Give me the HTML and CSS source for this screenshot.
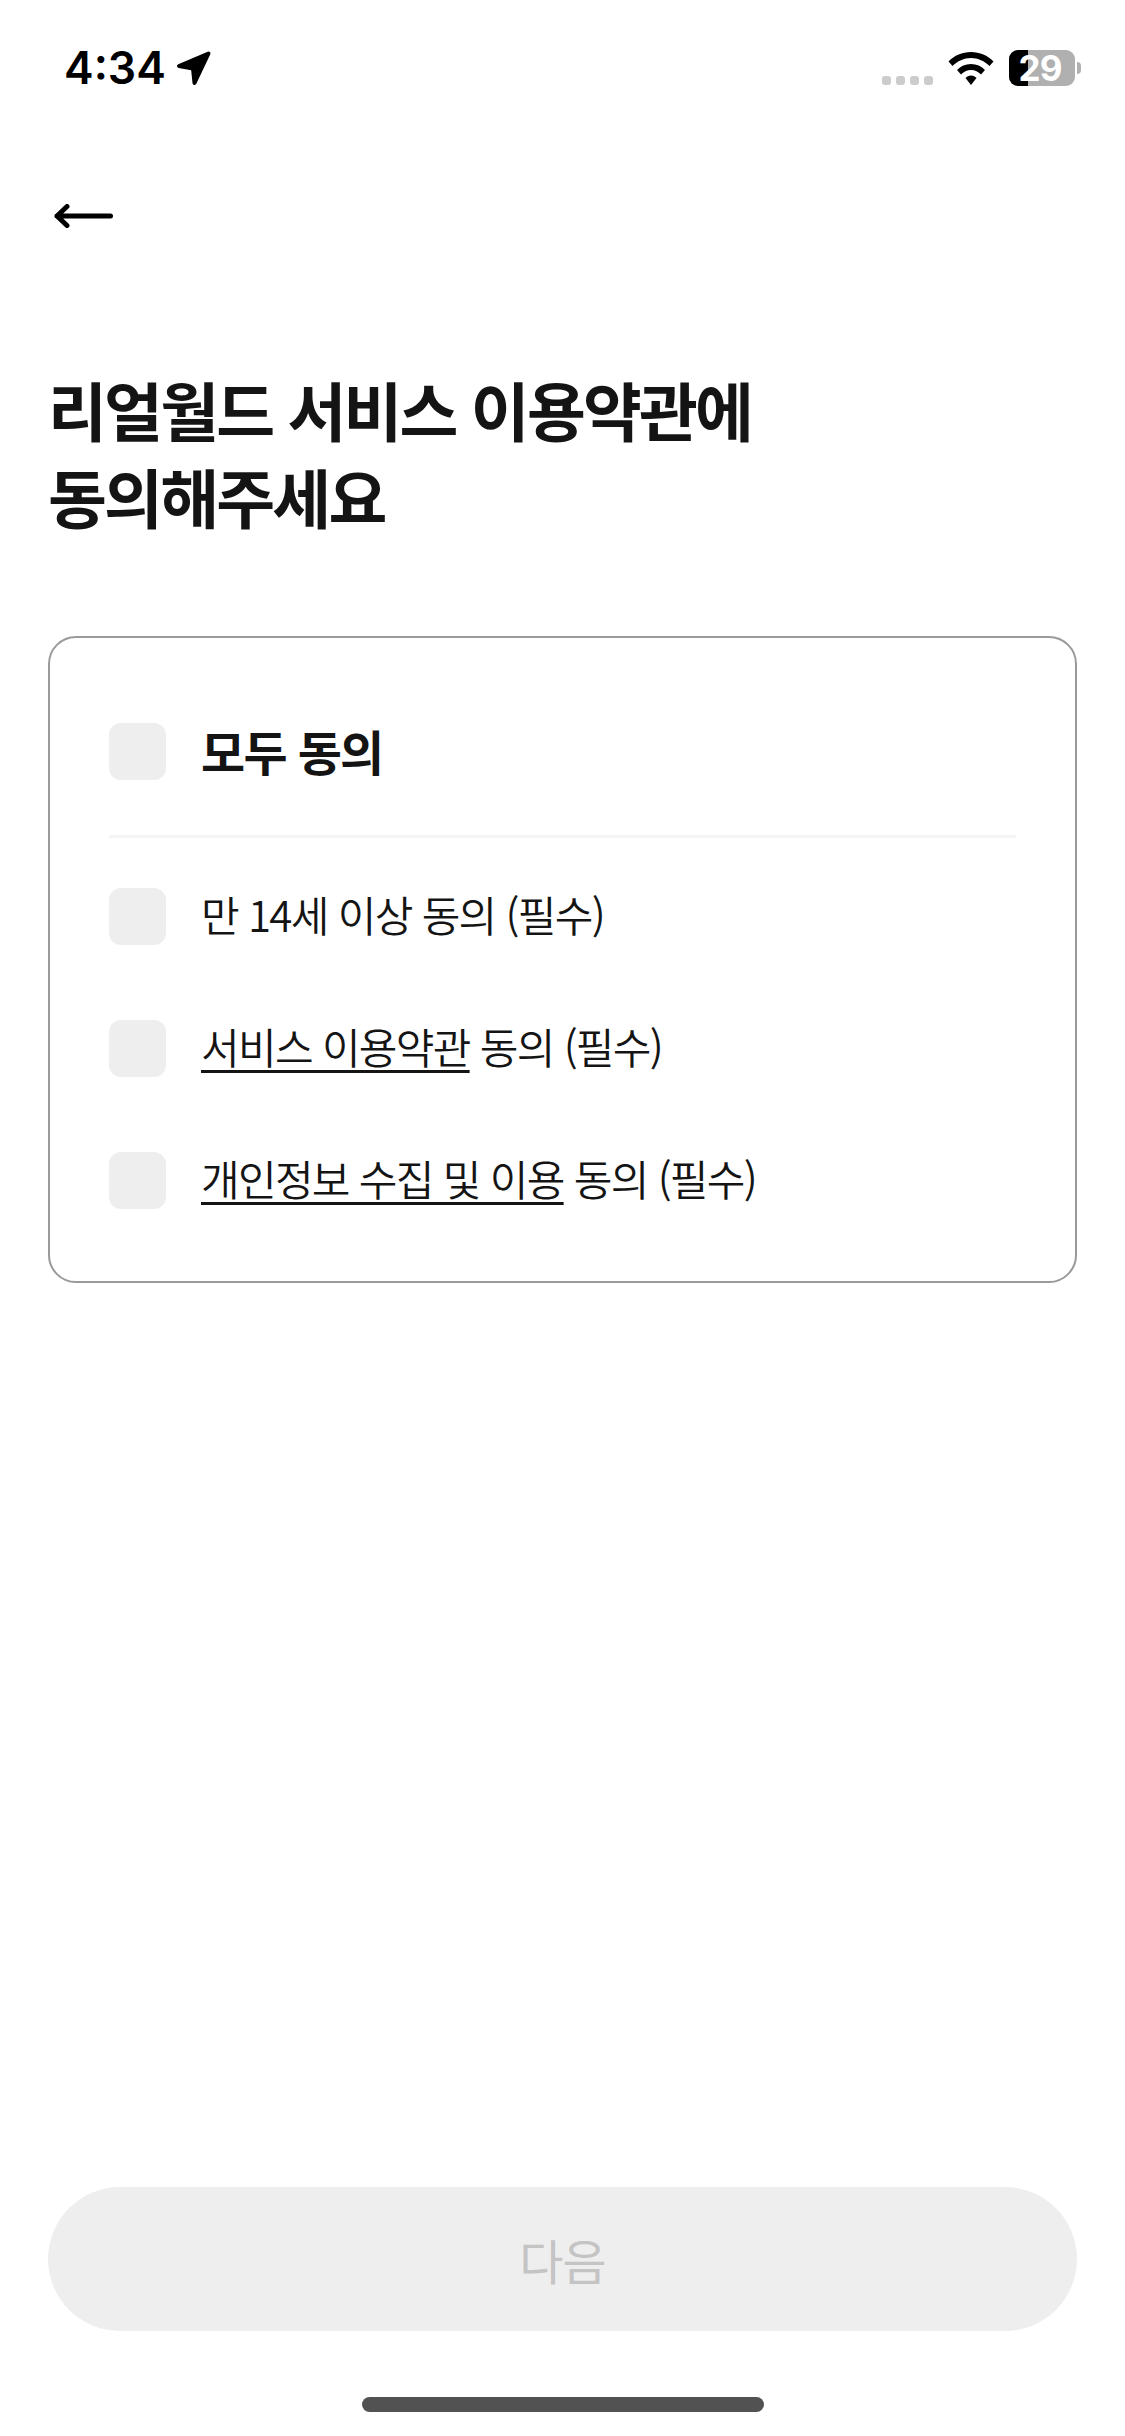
FILE: index.html
```html
<!DOCTYPE html>
<html lang="ko">
<head>
    <meta charset="utf-8">
    <title>리얼월드 서비스 이용약관</title>
    <link rel="stylesheet" href="styles.css">
</head>
<body>
    <div class="screen">
        <!-- Status bar -->
        <div class="status-bar">
            <div class="status-left">
                <span class="time">4:34</span>
                <svg class="location-icon" viewBox="0 0 36 36">
                    <path d="M32.500 3.500 L3 16 L17 18.500 L18.500 33 Z"/>
                </svg>
            </div>
            <div class="status-right">
                <div class="signal">
                    <span></span><span></span><span></span><span></span>
                </div>
                <svg class="wifi-icon" viewBox="0 0 46 33">
                    <path d="M23 0 C14 0 6.500 3.500 0.500 9.500 L4.500 14 C9.500 9 16 6 23 6 C30 6 36.500 9 41.500 14 L45.500 9.500 C39.500 3.500 32 0 23 0 Z"/>
                    <path d="M23 12 C17.500 12 12.500 14 9 18 L13 22.500 C15.500 19.800 19 18 23 18 C27 18 30.500 19.800 33 22.500 L37 18 C33.500 14 28.500 12 23 12 Z"/>
                    <path d="M23 23.500 C20.800 23.500 18.800 24.500 17.500 26 L23 33 L28.500 26 C27.200 24.500 25.200 23.500 23 23.500 Z"/>
                </svg>
                <div class="battery">
                    <div class="battery-body">
                        <div class="battery-level"></div>
                        <span class="battery-text">29</span>
                    </div>
                    <div class="battery-cap"></div>
                </div>
            </div>
        </div>

        <!-- Terug knop -->
        <div class="back-row">
            <svg class="back-icon" viewBox="0 0 60 24">
                <path d="M56.500 12 H3 M13 2.500 L3 12 L13 21.500"/>
            </svg>
        </div>

        <h1 class="title">리얼월드 서비스 이용약관에<br>동의해주세요</h1>

        <!-- Akkoord lijst -->
        <div class="agree-card">
            <div class="agree-row agree-all">
                <div class="check-box"></div>
                <span>모두 동의</span>
            </div>
            <div class="divider"></div>
            <div class="agree-list">
                <div class="agree-row">
                    <div class="check-box"></div>
                    <span>만 14세 이상 동의 (필수)</span>
                </div>
                <div class="agree-row">
                    <div class="check-box"></div>
                    <span><a href="#">서비스 이용약관</a> 동의 (필수)</span>
                </div>
                <div class="agree-row">
                    <div class="check-box"></div>
                    <span><a href="#">개인정보 수집 및 이용</a> 동의 (필수)</span>
                </div>
            </div>
        </div>

        <div class="spacer"></div>

        <button class="next-button">다음</button>

        <div class="home-bar"></div>
    </div>
</body>
</html>
```

FILE: styles.css
```css
body {
    margin: 0;
    background-color: #ffffff;
    color: #141414;
    font-family: "Noto Sans CJK KR", "Noto Sans", sans-serif;
}

.screen {
    width: 1125px;
    height: 2436px;
    display: flex;
    flex-direction: column;
    overflow: hidden;
}

/* Status bar */
.status-bar {
    height: 136px;
    margin-bottom: 40px;
    padding: 0 44px 0 64px;
    display: flex;
    justify-content: space-between;
    align-items: center;
}

.status-left {
    display: flex;
    align-items: center;
    gap: 10px;
}

.time {
    font-family: Inter, "Liberation Sans", sans-serif;
    font-size: 44.5px;
    font-weight: 600;
    color: #000000;
}

.location-icon {
    width: 36px;
    height: 36px;
    fill: #000000;
    stroke: #000000;
    stroke-width: 4;
    stroke-linejoin: round;
}

.status-right {
    display: flex;
    align-items: center;
}

.signal {
    display: flex;
    gap: 5px;
    margin-top: 24px;
    margin-right: 15px;
}

.signal span {
    width: 9px;
    height: 9px;
    border-radius: 3px;
    background-color: #cccccc;
}

.wifi-icon {
    width: 46px;
    height: 33px;
    fill: #000000;
    margin-right: 15px;
}

.battery {
    display: flex;
    align-items: center;
    gap: 2px;
}

.battery-body {
    width: 66px;
    height: 36px;
    border-radius: 9px;
    background-color: #b0b0b0;
    position: relative;
    display: flex;
    align-items: center;
    justify-content: center;
}

.battery-level {
    position: absolute;
    left: 0;
    top: 0;
    bottom: 0;
    width: 19px;
    border-radius: 9px 0 0 9px;
    background-color: #000000;
}

.battery-text {
    position: relative;
    margin-right: 4px;
    font-family: Inter, "Liberation Sans", sans-serif;
    font-size: 35px;
    line-height: 36px;
    font-weight: 700;
    letter-spacing: -1px;
    color: #ffffff;
}

.battery-cap {
    width: 4px;
    height: 12px;
    border-radius: 0 6px 6px 0;
    background-color: #b0b0b0;
}

/* Terug knop */
.back-row {
    height: 80px;
    padding-left: 54px;
    display: flex;
    align-items: center;
}

.back-icon {
    width: 60px;
    height: 24px;
    fill: none;
    stroke: #000000;
    stroke-width: 5;
    stroke-linecap: round;
    stroke-linejoin: round;
}

.title {
    margin: 109px 48px 97px;
    font-size: 64px;
    font-weight: 700;
    line-height: 87px;
    letter-spacing: -2.8px;
}

/* Akkoord lijst */
.agree-card {
    margin: 0 48px;
    padding: 85px 59px 72px;
    border: 2px solid #9a9a9a;
    border-radius: 28px;
}

.agree-row {
    height: 57px;
    display: flex;
    align-items: center;
    gap: 35px;
    font-size: 42px;
    font-weight: 350;
    letter-spacing: -1.7px;
    white-space: nowrap;
}

.agree-row span {
    margin-bottom: 6px;
}

.agree-all {
    font-size: 48px;
    font-weight: 700;
}

.agree-all span {
    margin-bottom: 3px;
}

.agree-row a {
    color: inherit;
    text-decoration: underline;
    text-decoration-thickness: 3px;
    text-underline-offset: 6px;
}

.check-box {
    width: 57px;
    height: 57px;
    flex-shrink: 0;
    border-radius: 12px;
    background-color: #eeeeee;
}

.divider {
    height: 3px;
    margin: 55px 0 50px;
    background-color: #f5f5f5;
}

.agree-list {
    display: flex;
    flex-direction: column;
    gap: 75px;
}

.spacer {
    flex: 1;
}

.next-button {
    height: 144px;
    margin: 0 48px;
    border: none;
    border-radius: 72px;
    background-color: #eeeeee;
    color: #c4c4c4;
    font-family: inherit;
    font-size: 48px;
    font-weight: 400;
    letter-spacing: -1px;
}

.home-bar {
    width: 402px;
    height: 15px;
    margin: 66px auto 24px;
    border-radius: 8px;
    background-color: #525252;
}
```
